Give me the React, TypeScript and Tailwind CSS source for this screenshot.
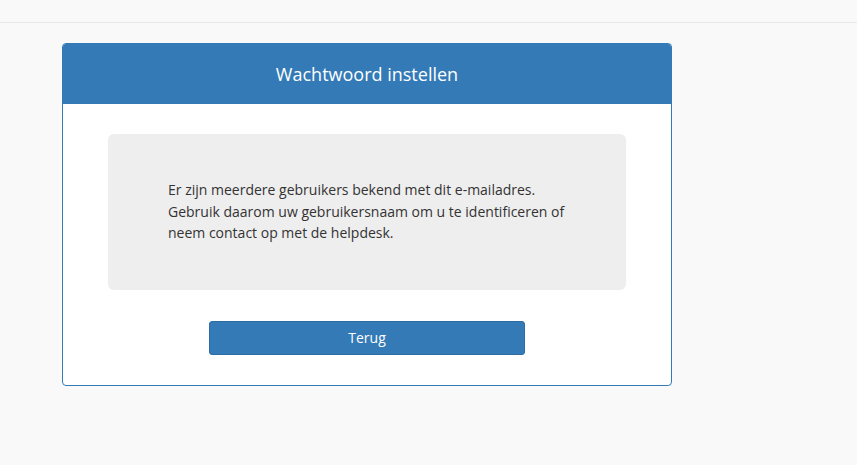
import React from 'react';

const App: React.FC = () => {
  return (
    <div
      className="min-h-screen bg-[#f9f9f9] text-[#333]"
      style={{ fontFamily: '"Open Sans", "Noto Sans", sans-serif' }}
    >
      {/* top bar */}
      <div className="h-[23px] border-b border-[#e9e9e9] bg-[#f9f9f9]" />

      <div className="pl-[62px] pt-[20px]">
        <div className="w-[610px] rounded-[4px] border border-[#337ab7] bg-white">
          <div className="flex h-[60px] items-center justify-center rounded-t-[3px] bg-[#337ab7]">
            <h1 className="text-[18px] text-white">Wachtwoord instellen</h1>
          </div>

          <div className="flex flex-col items-center px-[45px] pt-[30px] pb-[30px]">
            <div className="w-full rounded-[6px] bg-[#eeeeee] px-[60px] pt-[45px] pb-[46px] text-[14px] leading-[21.5px] text-[#333]">
              Er zijn meerdere gebruikers bekend met dit e-mailadres.
              <br />
              Gebruik daarom uw gebruikersnaam om u te identificeren of
              <br />
              neem contact op met de helpdesk.
            </div>

            <button className="mt-[31px] h-[34px] w-[316px] rounded-[3px] border border-[#2e6da4] bg-[#337ab7] text-[14px] text-white">
              Terug
            </button>
          </div>
        </div>
      </div>
    </div>
  );
};

export default App;
